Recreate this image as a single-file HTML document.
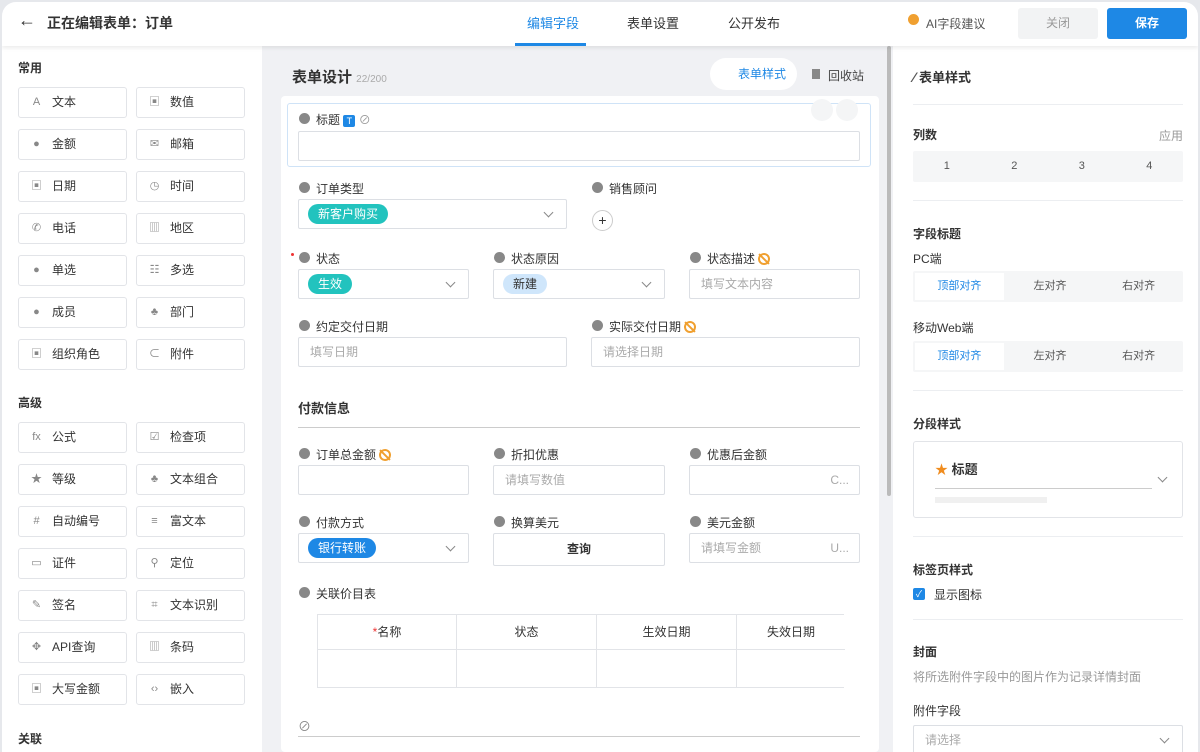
<!DOCTYPE html>
<html><head><meta charset="utf-8"><style>
*{box-sizing:border-box;margin:0;padding:0}
body{width:1200px;height:752px;overflow:hidden;background:#e6e8ec;font-family:"Liberation Sans","Noto Sans CJK SC",sans-serif;color:#333;font-size:12px;position:relative}
.frame{position:absolute;left:2px;top:2px;right:2px;bottom:0;border-radius:14px 14px 0 0;overflow:hidden;background:#f0f1f4}
.abs{position:absolute}
.hdr{left:0;top:0;width:100%;height:44px;background:#fff;box-shadow:0 2px 4px rgba(0,0,0,.08);z-index:2}
.side{left:0;top:44px;width:260px;bottom:0;background:#fff}
.right{left:891px;top:44px;right:0;bottom:0;background:#fff}
.btn{position:absolute;width:109px;height:31px;border:1px solid #e2e4e8;border-radius:3px;background:#fff;font-size:12px;line-height:29px;padding-left:33px;color:#333}
.btn i{position:absolute;left:12px;top:9px;width:11px;height:11px;font-style:normal;color:#888;font-size:11px;line-height:11px;text-align:center}
.sec{position:absolute;left:16px;font-size:12px;font-weight:bold;color:#333}
.card{left:279px;top:94px;width:598px;bottom:0;background:#fff;border-radius:4px}
.lbl{position:absolute;font-size:12px;color:#333;padding-left:18px}
.lbl:before{content:"";position:absolute;left:1px;top:2px;width:11px;height:11px;border-radius:50%;background:#888}
.inp{position:absolute;height:30px;border:1px solid #dcdfe4;border-radius:2px;background:#fff;color:#aaa;font-size:12px;line-height:28px;padding-left:11px}
.tag{display:inline-block;height:20px;line-height:20px;padding:0 10px;border-radius:10px;color:#fff;font-size:12px;margin-top:4px;margin-left:-2px}
.chev{position:absolute;right:14px;top:9px;width:7px;height:7px;border-right:1px solid #888;border-bottom:1px solid #888;transform:rotate(45deg)}
.hid{display:inline-block;width:12px;height:12px;border:2px solid #f0a030;border-radius:50%;vertical-align:-2px;margin-left:3px;position:relative}
.hid:after{content:"";position:absolute;left:3px;top:-3px;width:2px;height:14px;background:#f0a030;transform:rotate(-45deg)}
.rt{position:absolute;left:20px;font-size:12px;font-weight:bold;color:#333}
.line{position:absolute;left:20px;width:270px;height:1px;background:#eceef1}
.seg{position:absolute;left:20px;width:270px;height:31px;background:#f5f6f7;display:flex;border-radius:2px}
.seg div{flex:1;text-align:center;line-height:31px;font-size:11px;color:#555}
.seg .on{background:#fff;color:#1e88e5;margin:2px;line-height:27px}
</style></head><body><div class="frame">
<div class="abs hdr">
 <div class="abs" style="left:16px;top:8px;font-size:18px;color:#333">←</div>
 <div class="abs" style="left:45px;top:11px;font-size:14px;font-weight:bold">正在编辑表单：订单</div>
 <div class="abs" style="left:525px;top:11px;font-size:13px;color:#1e88e5">编辑字段</div>
 <div class="abs" style="left:513px;top:41px;width:71px;height:3px;background:#1e88e5"></div>
 <div class="abs" style="left:625px;top:11px;font-size:13px">表单设置</div>
 <div class="abs" style="left:726px;top:11px;font-size:13px">公开发布</div>
 <div class="abs" style="left:906px;top:12px;width:11px;height:11px;border-radius:50%;background:#f0a030"></div>
 <div class="abs" style="left:924px;top:13px;font-size:12px;color:#555">AI字段建议</div>
 <div class="abs" style="left:1016px;top:6px;width:80px;height:31px;background:#f2f3f4;border-radius:3px;text-align:center;line-height:31px;color:#999;font-size:12px">关闭</div>
 <div class="abs" style="left:1105px;top:6px;width:80px;height:31px;background:#1e88e5;border-radius:3px;text-align:center;line-height:31px;color:#fff;font-size:12px;font-weight:bold">保存</div>
</div>
<div class="abs side">
 <div class="sec" style="top:13px">常用</div>
 <div class="btn" style="left:16px;top:41px"><i>A</i>文本</div><div class="btn" style="left:134px;top:41px"><i>▣</i>数值</div>
 <div class="btn" style="left:16px;top:83px"><i>●</i>金额</div><div class="btn" style="left:134px;top:83px"><i>✉</i>邮箱</div>
 <div class="btn" style="left:16px;top:125px"><i>▣</i>日期</div><div class="btn" style="left:134px;top:125px"><i>◷</i>时间</div>
 <div class="btn" style="left:16px;top:167px"><i>✆</i>电话</div><div class="btn" style="left:134px;top:167px"><i>▥</i>地区</div>
 <div class="btn" style="left:16px;top:209px"><i>●</i>单选</div><div class="btn" style="left:134px;top:209px"><i>☷</i>多选</div>
 <div class="btn" style="left:16px;top:251px"><i>●</i>成员</div><div class="btn" style="left:134px;top:251px"><i>♣</i>部门</div>
 <div class="btn" style="left:16px;top:293px"><i>▣</i>组织角色</div><div class="btn" style="left:134px;top:293px"><i>⊂</i>附件</div>
 <div class="sec" style="top:348px">高级</div>
 <div class="btn" style="left:16px;top:376px"><i>fx</i>公式</div><div class="btn" style="left:134px;top:376px"><i>☑</i>检查项</div>
 <div class="btn" style="left:16px;top:418px"><i>★</i>等级</div><div class="btn" style="left:134px;top:418px"><i>♣</i>文本组合</div>
 <div class="btn" style="left:16px;top:460px"><i>#</i>自动编号</div><div class="btn" style="left:134px;top:460px"><i>≡</i>富文本</div>
 <div class="btn" style="left:16px;top:502px"><i>▭</i>证件</div><div class="btn" style="left:134px;top:502px"><i>⚲</i>定位</div>
 <div class="btn" style="left:16px;top:544px"><i>✎</i>签名</div><div class="btn" style="left:134px;top:544px"><i>⌗</i>文本识别</div>
 <div class="btn" style="left:16px;top:586px"><i>✥</i>API查询</div><div class="btn" style="left:134px;top:586px"><i>▥</i>条码</div>
 <div class="btn" style="left:16px;top:628px"><i>▣</i>大写金额</div><div class="btn" style="left:134px;top:628px"><i>‹›</i>嵌入</div>
 <div class="sec" style="top:684px">关联</div>
</div>
<div class="abs" style="left:290px;top:64px;font-size:15px;font-weight:bold">表单设计 <span style="font-size:10px;color:#aaa;font-weight:normal">22/200</span></div>
<div class="abs" style="left:708px;top:56px;width:87px;height:32px;background:#fff;border-radius:16px;color:#1e88e5;line-height:32px;padding-left:28px;font-size:12px">表单样式</div>
<div class="abs" style="left:826px;top:65px;font-size:12px;color:#444">回收站</div>
<div class="abs" style="left:810px;top:67px;width:8px;height:10px;background:#888"></div>
<div class="abs" style="left:885px;top:44px;width:4px;height:450px;background:#bbb;border-radius:2px"></div>
<div class="abs card">
 <div class="abs" style="left:6px;top:7px;width:584px;height:64px;border:1px solid #cfe3f7;border-radius:3px"></div>
 <div class="abs" style="left:530px;top:3px;width:22px;height:22px;border-radius:50%;background:#f4f5f6"></div>
 <div class="abs" style="left:555px;top:3px;width:22px;height:22px;border-radius:50%;background:#f4f5f6"></div>
 <div class="lbl" style="left:17px;top:15px">标题 <span style="display:inline-block;width:12px;height:12px;background:#1e88e5;color:#fff;font-size:9px;line-height:12px;text-align:center;border-radius:2px">T</span> <span style="color:#999">⊘</span></div>
 <div class="inp" style="left:17px;top:35px;width:562px"></div>
 <div class="lbl" style="left:17px;top:84px">订单类型</div>
 <div class="inp" style="left:17px;top:103px;width:269px"><span class="tag" style="background:#22c3be">新客户购买</span><span class="chev"></span></div>
 <div class="lbl" style="left:310px;top:84px">销售顾问</div>
 <div class="abs" style="left:311px;top:114px;width:21px;height:21px;border:1px solid #ccc;border-radius:50%;text-align:center;line-height:19px;font-size:14px">+</div>
 <div class="abs" style="left:10px;top:157px;width:3px;height:3px;background:#e33;border-radius:50%"></div>
 <div class="lbl" style="left:17px;top:154px">状态</div>
 <div class="inp" style="left:17px;top:173px;width:171px"><span class="tag" style="background:#22c3be">生效</span><span class="chev"></span></div>
 <div class="lbl" style="left:212px;top:154px">状态原因</div>
 <div class="inp" style="left:212px;top:173px;width:172px"><span class="tag" style="background:#cfe6fb;color:#333">新建</span><span class="chev"></span></div>
 <div class="lbl" style="left:408px;top:154px">状态描述<span class="hid"></span></div>
 <div class="inp" style="left:408px;top:173px;width:171px">填写文本内容</div>
 <div class="lbl" style="left:17px;top:222px">约定交付日期</div>
 <div class="inp" style="left:17px;top:241px;width:269px">填写日期</div>
 <div class="lbl" style="left:310px;top:222px">实际交付日期<span class="hid"></span></div>
 <div class="inp" style="left:310px;top:241px;width:269px">请选择日期</div>
 <div class="abs" style="left:17px;top:302px;font-size:13px;font-weight:bold">付款信息</div>
 <div class="abs" style="left:17px;top:331px;width:562px;height:1px;background:#ccc"></div>
 <div class="lbl" style="left:17px;top:350px">订单总金额<span class="hid"></span></div>
 <div class="inp" style="left:17px;top:369px;width:171px"></div>
 <div class="lbl" style="left:212px;top:350px">折扣优惠</div>
 <div class="inp" style="left:212px;top:369px;width:172px">请填写数值</div>
 <div class="lbl" style="left:408px;top:350px">优惠后金额</div>
 <div class="inp" style="left:408px;top:369px;width:171px;text-align:right;padding-right:10px">C...</div>
 <div class="lbl" style="left:17px;top:418px">付款方式</div>
 <div class="inp" style="left:17px;top:437px;width:171px"><span class="tag" style="background:#1e88e5">银行转账</span><span class="chev"></span></div>
 <div class="lbl" style="left:212px;top:418px">换算美元</div>
 <div class="inp" style="left:212px;top:437px;width:172px;height:33px;text-align:center;color:#333;font-weight:bold;line-height:31px;padding:0">查询</div>
 <div class="lbl" style="left:408px;top:418px">美元金额</div>
 <div class="inp" style="left:408px;top:437px;width:171px">请填写金额<span style="position:absolute;right:10px">U...</span></div>
 <div class="lbl" style="left:17px;top:489px">关联价目表</div>
 <div class="abs" style="left:36px;top:518px;width:527px;height:74px;border:1px solid #e2e4e8;border-right:none;display:grid;grid-template-columns:139px 140px 140px 108px;grid-template-rows:35px 38px">
  <div style="border-right:1px solid #e2e4e8;border-bottom:1px solid #e2e4e8;text-align:center;line-height:34px"><span style="color:#e33">*</span>名称</div>
  <div style="border-right:1px solid #e2e4e8;border-bottom:1px solid #e2e4e8;text-align:center;line-height:34px">状态</div>
  <div style="border-right:1px solid #e2e4e8;border-bottom:1px solid #e2e4e8;text-align:center;line-height:34px">生效日期</div>
  <div style="border-bottom:1px solid #e2e4e8;text-align:center;line-height:34px">失效日期</div>
  <div style="border-right:1px solid #e2e4e8"></div><div style="border-right:1px solid #e2e4e8"></div><div style="border-right:1px solid #e2e4e8"></div><div></div>
 </div>
 <div class="abs" style="left:17px;top:620px;color:#888;font-size:13px">⊘</div>
 <div class="abs" style="left:17px;top:640px;width:562px;height:1px;background:#ccc"></div>
</div>
<div class="abs right">
 <div class="rt" style="top:21px;font-size:13px"><span style="color:#555;font-size:14px">⁄</span> 表单样式</div>
 <div class="line" style="top:58px"></div>
 <div class="rt" style="top:80px">列数</div>
 <div class="abs" style="right:15px;top:81px;color:#999">应用</div>
 <div class="seg" style="top:105px"><div>1</div><div>2</div><div>3</div><div>4</div></div>
 <div class="line" style="top:154px"></div>
 <div class="rt" style="top:179px">字段标题</div>
 <div class="abs" style="left:20px;top:204px;font-size:12px">PC端</div>
 <div class="seg" style="top:225px"><div class="on">顶部对齐</div><div>左对齐</div><div>右对齐</div></div>
 <div class="abs" style="left:20px;top:273px;font-size:12px">移动Web端</div>
 <div class="seg" style="top:295px"><div class="on">顶部对齐</div><div>左对齐</div><div>右对齐</div></div>
 <div class="line" style="top:344px"></div>
 <div class="rt" style="top:369px">分段样式</div>
 <div class="abs" style="left:20px;top:395px;width:270px;height:77px;border:1px solid #e2e4e8;border-radius:3px">
  <div class="abs" style="left:21px;top:17px;font-size:13px;font-weight:bold"><span style="color:#f08c1e">★</span> 标题</div>
  <div class="abs" style="left:21px;top:46px;width:217px;height:1px;background:#ccc"></div>
  <div class="abs" style="left:21px;top:55px;width:112px;height:6px;background:#f0f0f0"></div>
  <div class="chev" style="top:32px;right:16px"></div>
 </div>
 <div class="line" style="top:490px"></div>
 <div class="rt" style="top:515px">标签页样式</div>
 <div class="abs" style="left:20px;top:542px;width:12px;height:12px;background:#1e88e5;border-radius:2px;color:#fff;font-size:9px;line-height:12px;text-align:center">✓</div>
 <div class="abs" style="left:41px;top:540px;font-size:12px">显示图标</div>
 <div class="line" style="top:573px"></div>
 <div class="rt" style="top:597px">封面</div>
 <div class="abs" style="left:20px;top:622px;color:#999">将所选附件字段中的图片作为记录详情封面</div>
 <div class="abs" style="left:20px;top:656px">附件字段</div>
 <div class="inp" style="left:20px;top:679px;width:270px">请选择<span class="chev"></span></div>
</div>
</div></body></html>
